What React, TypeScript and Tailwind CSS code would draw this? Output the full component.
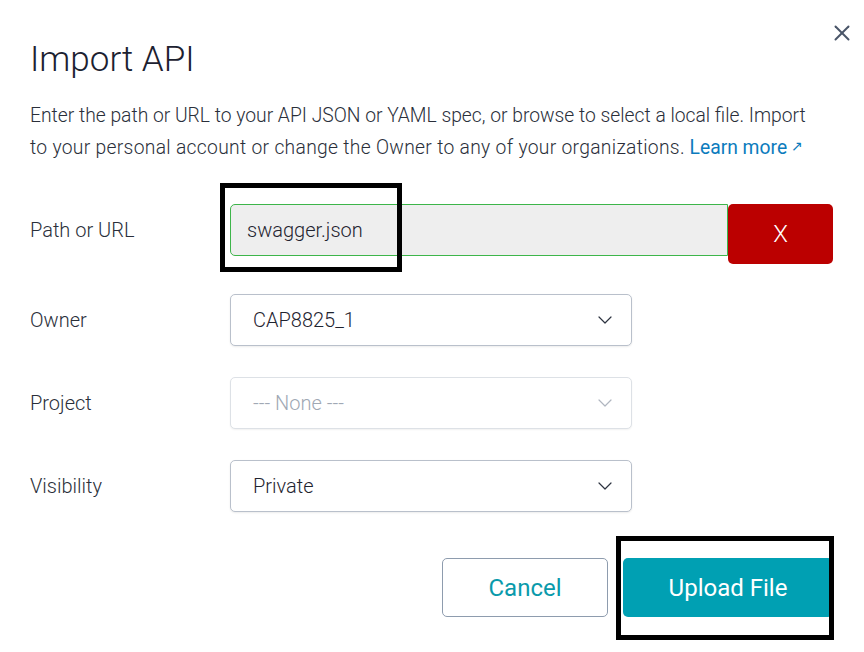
import React from "react";
import { ChevronDown, X } from "lucide-react";

interface SelectProps {
  value: string;
  disabled?: boolean;
}

const FakeSelect = ({ value, disabled = false }: SelectProps) => (
  <div
    className={
      disabled
        ? "w-[402px] h-[52px] flex items-center justify-between pl-[22px] pr-[14px] rounded-[5px] border border-[#dde1e6] bg-white shadow-[0_1px_2px_rgba(0,0,0,0.06)] text-[#a0a8b4]"
        : "w-[402px] h-[52px] flex items-center justify-between pl-[22px] pr-[14px] rounded-[5px] border border-[#b9c0cb] bg-white shadow-[0_1px_2px_rgba(0,0,0,0.08)] text-[#1f2430]"
    }
  >
    <span className="text-[20px] font-light">{value}</span>
    <ChevronDown
      className={disabled ? "w-[24px] h-[24px] text-[#b0b6c0]" : "w-[24px] h-[24px] text-[#2d3340]"}
      strokeWidth={1.2}
    />
  </div>
);

const Row = ({ label, children }: { label: string; children: React.ReactNode }) => (
  <div className="flex items-center">
    <div className="w-[200px] text-[20px] font-light text-[#2a2f3a]">{label}</div>
    {children}
  </div>
);

export default function App() {
  return (
    <div
      className="relative w-[864px] h-[652px] bg-white overflow-hidden"
      style={{ fontFamily: "Roboto, 'Liberation Sans', sans-serif" }}
    >
      <button className="absolute left-[829px] top-[20px] text-[#4a5568]">
        <X className="w-[26px] h-[26px]" strokeWidth={1.8} />
      </button>

      <div className="pl-[30px] pt-[36px]">
        <h1 className="text-[35px] font-light text-[#1c2130] leading-[48px]">Import API</h1>
        <p className="mt-[16px] w-[830px] text-[19.3px] font-light leading-[32px] text-[#2a2f3a] whitespace-nowrap">
          Enter the path or URL to your API JSON or YAML spec, or browse to select a local file. Import
          <br />
          <span className="tracking-[0.3px]">
            to your personal account or change the Owner to any of your organizations.
          </span>{" "}
          <span className="text-[#0b7bbd] font-normal">
            Learn more<span className="inline-block text-[14px] align-top ml-[4px] -mt-[2px]">↗</span>
          </span>
        </p>

        <div className="mt-[40px] flex flex-col">
          <div className="flex items-start">
            <div className="w-[200px] h-[52px] flex items-center text-[20px] font-light text-[#2a2f3a]">Path or URL</div>
            <div className="w-[498px] h-[52px] flex items-center pl-[16px] bg-[#eeeeee] border border-[#3db54a] rounded-l-[5px] text-[20px] font-light text-[#1f2430]">
              swagger.json
            </div>
            <button className="w-[105px] h-[60px] flex items-center justify-center bg-[#bb0000] rounded-[5px] text-white text-[24px] font-light">
              X
            </button>
          </div>

          <div className="mt-[30px] flex flex-col gap-[31px]">
            <Row label="Owner">
              <FakeSelect value="CAP8825_1" />
            </Row>
            <Row label="Project">
              <FakeSelect value="--- None ---" disabled />
            </Row>
            <Row label="Visibility">
              <FakeSelect value="Private" />
            </Row>
          </div>
        </div>

        <div className="mt-[46px] flex justify-end gap-[15px] pr-[31px]">
          <button className="w-[166px] h-[59px] rounded-[5px] border border-[#8e9cae] bg-white text-[24px] text-[#0a9aab]">
            Cancel
          </button>
          <button className="w-[210px] h-[59px] rounded-[5px] bg-[#00a0b3] text-[24px] text-white">
            Upload File
          </button>
        </div>
      </div>

      {/* annotation boxes */}
      <div className="absolute left-[220px] top-[183px] w-[182px] h-[89px] border-[5px] border-black pointer-events-none" />
      <div className="absolute left-[616px] top-[536px] w-[218px] h-[104px] border-[5px] border-black pointer-events-none" />
    </div>
  );
}
